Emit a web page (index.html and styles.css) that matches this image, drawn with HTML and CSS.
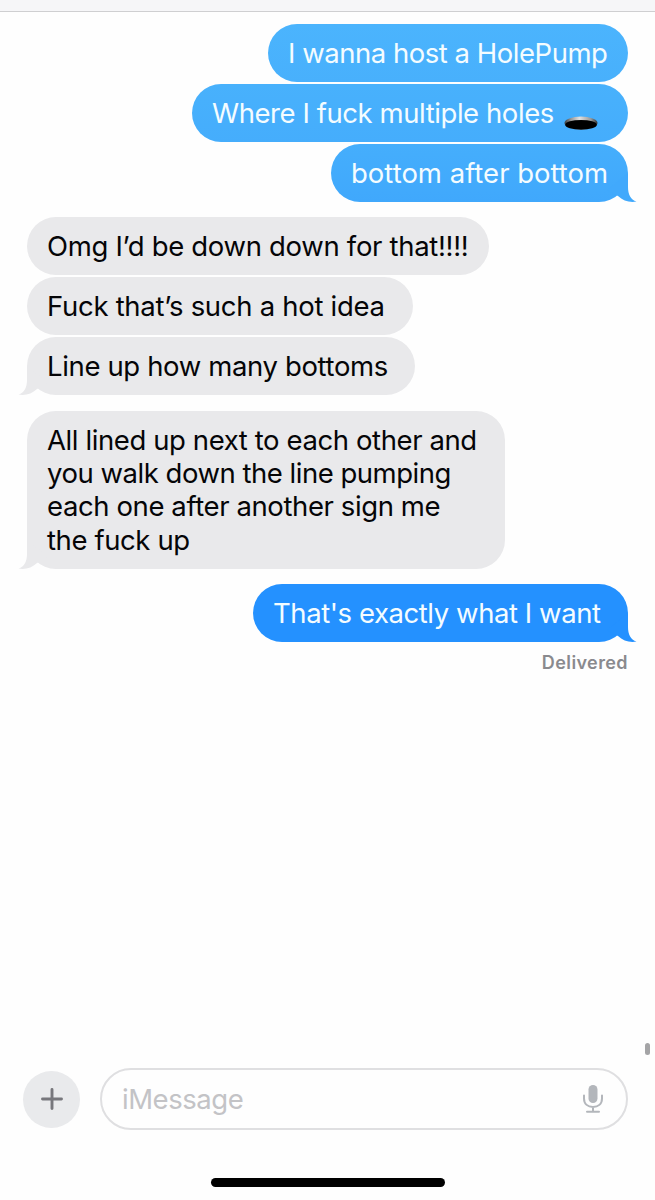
FILE: index.html
```html
<!DOCTYPE html>
<html lang="en">
<head>
<meta charset="utf-8">
<title>Messages</title>
<link rel="stylesheet" href="styles.css">
</head>
<body>
<div class="screen">
  <header class="navbar"></header>
  <main class="thread">
    <section class="group sent">
      <div class="bubble sky w-host"><span>I wanna host a HolePump</span></div>
      <div class="bubble azure w-where"><span>Where I fuck multiple holes</span>
        <svg class="hole" viewBox="0 0 34 14"><defs><linearGradient id="rim"><stop offset="0" stop-color="#3c3c3c"/><stop offset=".2" stop-color="#999"/><stop offset=".45" stop-color="#e0e0e0"/><stop offset=".8" stop-color="#999"/><stop offset="1" stop-color="#333"/></linearGradient></defs><ellipse cx="17" cy="7" rx="16.5" ry="6.500" fill="url(#rim)"/><ellipse cx="17" cy="8.800" rx="15.800" ry="4.900" fill="#000"/></svg>
      </div>
      <div class="bubble blue w-bottom"><span>bottom after bottom</span>
        <svg class="tail" viewBox="0 0 30 30"><path d="M21 1V15C21 22 23.500 27.500 29.500 29.600C22.500 31 16 28.600 11 24L0 18Z"/></svg>
      </div>
    </section>
    <section class="group received">
      <div class="bubble w-omg"><span>Omg I’d be down down for that!!!!</span></div>
      <div class="bubble w-idea"><span>Fuck that’s such a hot idea</span></div>
      <div class="bubble w-line"><span>Line up how many bottoms</span>
        <svg class="tail" viewBox="0 0 30 30"><path d="M21 1V15C21 22 23.500 27.500 29.500 29.600C22.500 31 16 28.600 11 24L0 18Z"/></svg>
      </div>
    </section>
    <section class="group received">
      <div class="bubble w-all"><span>All lined up next to each other and<br><span class="tight">you walk down the line pumping</span><br>each one after another sign me<br>the fuck up</span>
        <svg class="tail" viewBox="0 0 30 30"><path d="M21 1V15C21 22 23.500 27.500 29.500 29.600C22.500 31 16 28.600 11 24L0 18Z"/></svg>
      </div>
    </section>
    <section class="group sent">
      <div class="bubble deep w-want"><span>That's exactly what I want</span>
        <svg class="tail" viewBox="0 0 30 30"><path d="M21 1V15C21 22 23.500 27.500 29.500 29.600C22.500 31 16 28.600 11 24L0 18Z"/></svg>
      </div>
      <p class="status">Delivered</p>
    </section>
  </main>
  <div class="scrollbar"></div>
  <footer class="composer">
    <div class="plus"><svg viewBox="0 0 22 22"><path d="M11 1.500V20.500M1.500 11H20.500"/></svg></div>
    <div class="field"><span class="placeholder">iMessage</span>
      <svg class="mic" viewBox="0 0 20 28"><rect x="5.500" y="0" width="9" height="18" rx="4.500"/><path d="M1 10.500V13.500C1 19 5 22 10 22S19 19 19 13.500V10.500M10 22V26.500M4 26.700H16"/></svg>
    </div>
  </footer>
  <div class="home"></div>
</div>
</body>
</html>
```
FILE: styles.css
```css
* { box-sizing: border-box; }
body { margin: 0; background: #fefefe; font-family: Inter, "Liberation Sans", sans-serif; }
.screen { position: relative; width: 655px; height: 1200px; display: flex; flex-direction: column; background: #fefefe; overflow: hidden; }
.navbar { height: 12px; flex: none; background: #f6f6f8; border-bottom: 1px solid #cfcfd1; }
.thread { flex: 1; padding: 12px 27px 0; display: flex; flex-direction: column; gap: 15.300px; }
.group { display: flex; flex-direction: column; gap: 2px; align-items: flex-start; }
.sent { align-items: flex-end; }
.bubble { position: relative; height: 58px; padding: 13px 0 0 20px; border-radius: 29px; background: #e9e9eb; color: #050507; font-size: 27.500px; line-height: 33.400px; white-space: nowrap; }
.bubble > span { position: relative; z-index: 1; }
.sent .bubble { color: #f4fcff; }
.bubble.sky { background: linear-gradient(#4bb4fd, #48b0fc); }
.bubble.azure { background: linear-gradient(#48b1fc, #45adfc); }
.bubble.blue { background: linear-gradient(#45aefc, #40a8fc); }
.bubble.deep { background: #2491ff; }
.tail { position: absolute; right: -9px; bottom: 0; width: 30px; height: 30px; fill: #41a9fc; }
.deep .tail { fill: #2491ff; }
.received .tail { right: auto; left: -9px; transform: scaleX(-1); fill: #e9e9eb; }
.hole { position: absolute; left: 372px; top: 32px; width: 34px; height: 14px; }
.w-host { width: 360px; letter-spacing: -0.470px; }
.w-where { width: 436px; letter-spacing: -0.430px; }
.w-bottom { width: 297px; }
.w-omg { width: 462px; letter-spacing: -0.310px; }
.w-idea { width: 386px; letter-spacing: -0.290px; }
.w-line { width: 388px; letter-spacing: -0.360px; }
.bubble.w-all { width: 478px; height: 158.500px; letter-spacing: -0.400px; }
.tight { letter-spacing: -0.480px; }
.w-want { width: 375px; letter-spacing: -0.430px; }
.status { margin: 8px 0 0; color: #8a8a8e; font-size: 18px; line-height: 22px; font-weight: 600; letter-spacing: 0.400px; }
.scrollbar { position: absolute; left: 645px; top: 1043px; width: 5px; height: 12px; border-radius: 3px; background: #a4a4a6; }
.composer { height: 62px; margin: 0 27px 0 23px; display: flex; align-items: center; gap: 20px; }
.plus { width: 57px; height: 57px; border-radius: 50%; background: #e9eaec; display: flex; align-items: center; justify-content: center; }
.plus svg { width: 22px; height: 22px; fill: none; stroke: #77777c; stroke-width: 2.900; stroke-linecap: round; }
.field { flex: 1; height: 62px; border: 2px solid #dfdfe1; border-radius: 31px; display: flex; align-items: center; justify-content: space-between; padding: 0 23px 0 20px; }
.placeholder { font-size: 27.500px; line-height: 34px; color: #c3c3c6; letter-spacing: -0.450px; }
.mic { width: 20px; height: 28px; fill: #b3b6bb; }
.mic path { fill: none; stroke: #b3b6bb; stroke-width: 2; stroke-linecap: round; }
.home { width: 234px; height: 9px; margin: 48px auto 13px 211px; flex: none; border-radius: 5px; background: #000; }
```
